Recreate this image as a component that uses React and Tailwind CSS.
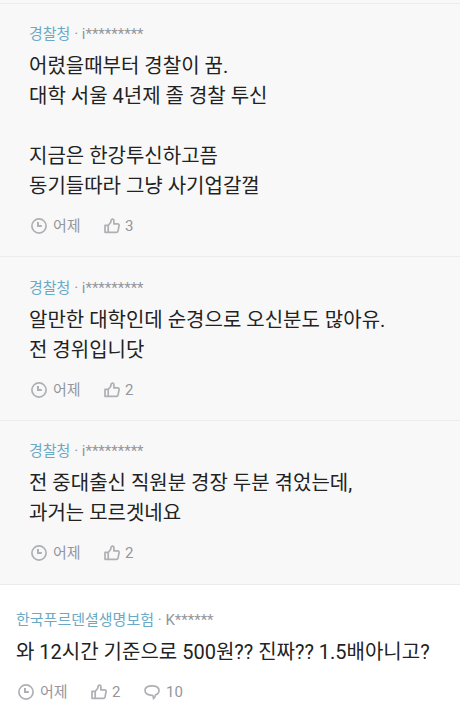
const comments = [
  {
    company: "경찰청",
    user: "i*********",
    lines: ["어렸을때부터 경찰이 꿈.", "대학 서울 4년제 졸 경찰 투신", "", "지금은 한강투신하고픔", "동기들따라 그냥 사기업갈껄"],
    likes: 3,
    spacing: "h-[253px] pt-5 pl-[29px]",
    reply: true,
  },
  {
    company: "경찰청",
    user: "i*********",
    lines: ["알만한 대학인데 순경으로 오신분도 많아유.", "전 경위입니닷"],
    likes: 2,
    spacing: "h-[164px] pt-[21px] pl-[29px]",
    reply: true,
  },
  {
    company: "경찰청",
    user: "i*********",
    lines: ["전 중대출신 직원분 경장 두분 겪었는데,", "과거는 모르겟네요"],
    likes: 2,
    spacing: "h-[164px] pt-5 pl-[29px]",
    reply: true,
  },
  {
    company: "한국푸르덴셜생명보험",
    user: "K******",
    lines: ["와 12시간 기준으로 500원?? 진짜?? 1.5배아니고?"],
    likes: 2,
    replies: 10,
    spacing: "pt-[25px] pl-4",
  },
];

function ClockIcon() {
  return (
    <svg className="h-[18px] w-[18px]" fill="none" stroke="#afb0b4" strokeWidth="1.7" viewBox="0 0 18 18">
      <circle cx="9" cy="9" r="7.1" />
      <path d="M8 5v4.100h3.800" strokeWidth="2" />
    </svg>
  );
}

function ThumbIcon() {
  return (
    <svg className="h-[18px] w-[18px]" fill="none" stroke="#afb0b4" strokeLinejoin="round" strokeWidth="1.7" viewBox="0 0 18 18">
      <path d="M2 8.300h3.200v7H2zM5.200 8.500 7.600 5.500l.6-2.500c.4-1.500 2.700-1.200 2.700.5v3.400h3.700c1 0 1.700.7 1.500 1.600l-1 5.200c-.2.9-.8 1.600-1.700 1.600H5.200" />
    </svg>
  );
}

function BubbleIcon() {
  return (
    <svg className="h-[18px] w-[18px]" fill="none" stroke="#afb0b4" strokeLinejoin="round" strokeWidth="1.7" viewBox="0 0 18 18">
      <path d="M9 2.800c4.300 0 7 1.900 7 4.700 0 2.500-1.600 3.900-3.600 4.500 0 1.500-.5 2.700-1.900 3.700.1-1.300-.3-2.500-.9-3.400H9c-4.300 0-7-1.900-7-4.800s2.700-4.700 7-4.700z" />
    </svg>
  );
}

function Comment({ company, user, lines, likes, replies, spacing, reply }) {
  return (
    <article className={`${spacing} ${reply ? "border-b border-[#ececec] bg-[#f8f8f8]" : "bg-white"}`}>
      <p className="h-5 text-[15px] leading-5 whitespace-nowrap text-[#94969b]">
        <span className="text-[#6baac6]">{company}</span> · {user}
      </p>
      <div className="mt-[7px] text-[20px] leading-[30px] whitespace-nowrap text-[#222]">
        {lines.map((line, i) => (
          <p className="h-[30px]" key={i}>
            {line}
          </p>
        ))}
      </div>
      <div className="mt-[15px] flex h-5 items-center pl-px text-[15px] leading-5 text-[#94969b]">
        <ClockIcon />
        <span className="ml-[5px]">어제</span>
        <span className="ml-[22.5px] flex items-center gap-1">
          <ThumbIcon />
          {likes}
        </span>
        {replies && (
          <span className="ml-[22.5px] flex items-center gap-[5px]">
            <BubbleIcon />
            {replies}
          </span>
        )}
      </div>
    </article>
  );
}

export default function App() {
  return (
    <main className="h-[723px] w-[460px] overflow-hidden bg-white font-[Roboto,'Noto_Sans_CJK_KR',sans-serif]">
      <div className="h-1 border-b border-[#ececec] bg-[#f8f8f8]" />
      {comments.map((comment, i) => (
        <Comment key={i} {...comment} />
      ))}
    </main>
  );
}
